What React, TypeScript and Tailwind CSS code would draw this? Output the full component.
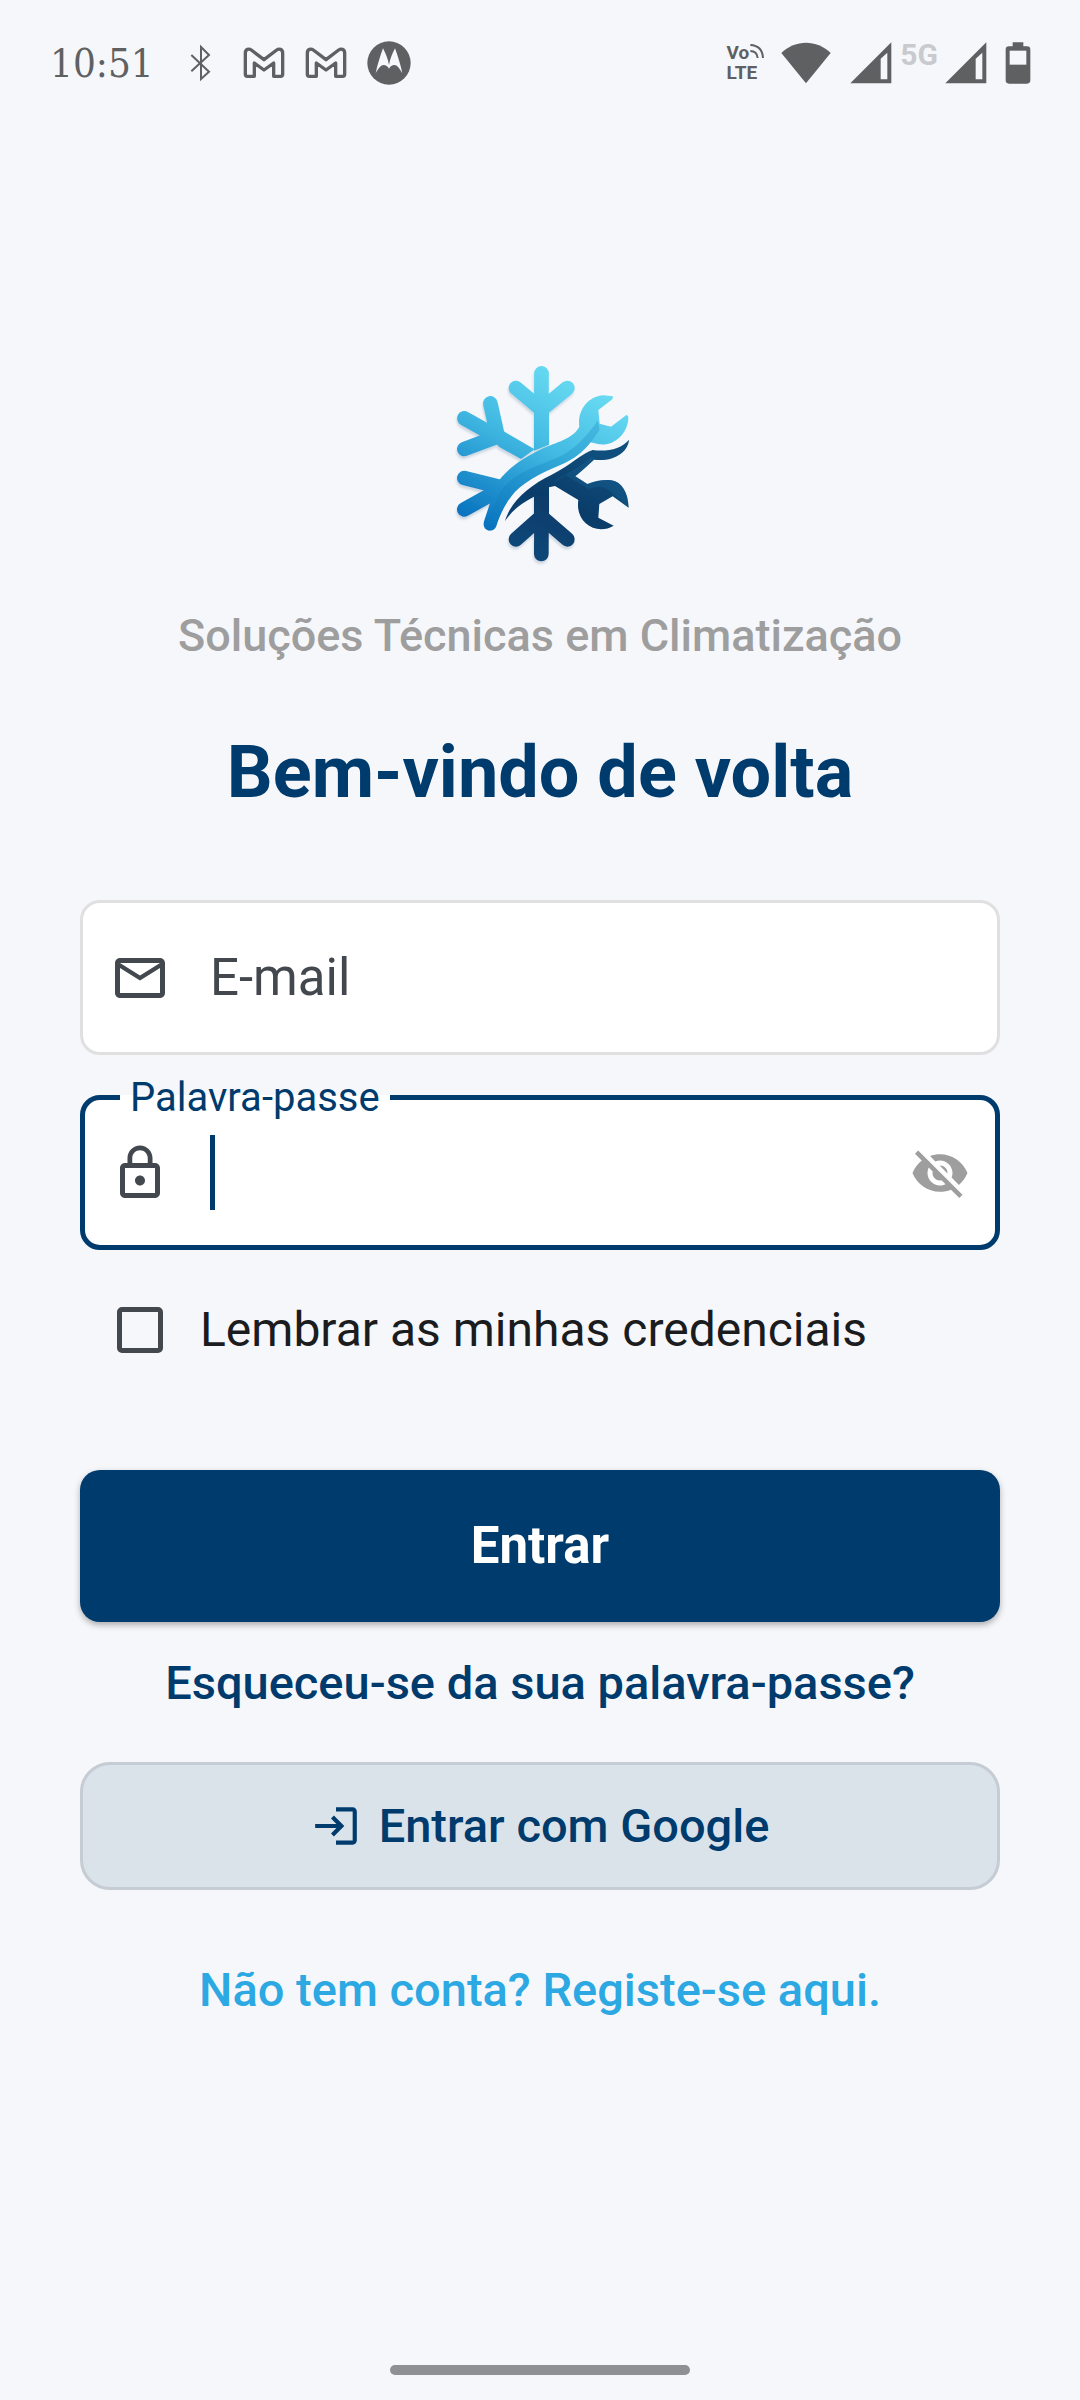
import React, { useState } from 'react';
import { MdLockOutline, MdLogin, MdMailOutline, MdVisibility, MdVisibilityOff } from 'react-icons/md';

const BluetoothIcon = () => (
  <svg width="22" height="38" viewBox="0 0 66 114" fill="none" stroke="#5f6062" strokeWidth="6">
    <path d="M4 33 L57 83 L33 105 V9 L57 33 L4 82" />
  </svg>
);

// Gmail notification icon
const GmailIcon = () => (
  <svg width="42" height="32" viewBox="0 0 126 96" fill="none" stroke="#5f6062" strokeWidth="10" strokeLinejoin="round">
    <path d="M7 82 V18 C7 6 18 4 25 9 L63 38 L101 9 C108 4 119 6 119 18 V82 Q119 88 113 88 H92 V48 L63 69 L34 48 V88 H13 Q7 88 7 82 Z" />
  </svg>
);

const MotorolaIcon = () => (
  <svg width="44" height="44" viewBox="0 0 132 132">
    <circle cx="66" cy="66" r="65" fill="#5f6062" />
    <path
      d="M48 22 C40 44 31 72 26 97 C34 82 42 72 50 72 C57 72 62 76 66 83 C70 76 75 72 82 72 C90 72 98 82 106 97 C101 72 92 44 84 22 C76 38 69 54 66 72 C63 54 56 38 48 22 Z"
      fill="#f6f7fb"
    />
  </svg>
);

const WifiIcon = () => (
  <svg width="50" height="42" viewBox="0 0 150 126" fill="#5f6062">
    <path d="M75 124 L1 33 C44 -8 106 -8 149 33 Z" />
  </svg>
);

const SignalIcon = () => (
  <svg width="42" height="42" viewBox="0 0 126 126">
    <path d="M124 1 V124 H1 Z" fill="#5f6062" />
    <path d="M112 32 V112 H92 V50 Z" fill="#f6f7fb" />
  </svg>
);

const BatteryIcon = () => (
  <svg width="26" height="42" viewBox="0 0 78 126">
    <path d="M23 1 H55 V13 H66 Q76 13 76 23 V115 Q76 125 66 125 H12 Q2 125 2 115 V23 Q2 13 12 13 H23 Z" fill="#5f6062" />
    <path d="M14 26 H64 V68 H14 Z" fill="#f6f7fb" />
  </svg>
);

const StatusBar = () => (
  <div className="flex h-[126px] items-center justify-between pl-[50px] pr-[49px] text-[#5f6062]">
    <div className="flex items-center">
      <span className="font-['DejaVu_Serif_Condensed','DejaVu_Serif',serif] text-[40px] leading-[48px]">10:51</span>
      <div className="ml-9 flex items-center">
        <BluetoothIcon />
      </div>
      <div className="ml-[31px] flex items-center gap-5">
        <GmailIcon />
        <GmailIcon />
        <MotorolaIcon />
      </div>
    </div>
    <div className="flex items-center">
      <div className="flex flex-col text-[19px] font-bold leading-[20px]">
        <div className="flex">
          <span>Vo</span>
          <svg width="16" height="16" viewBox="0 0 48 48" fill="none" stroke="#5f6062" strokeWidth="6">
            <path d="M4 6 Q40 8 42 45 M4 24 Q24 24 26 45" />
          </svg>
        </div>
        <span>LTE</span>
      </div>
      <div className="ml-4 flex items-center">
        <WifiIcon />
        <div className="ml-[19px]">
          <SignalIcon />
        </div>
        <span className="mb-4 ml-2 text-[30px] font-bold leading-[32px] text-[#c9cacd]">5G</span>
        <div className="ml-[7px]">
          <SignalIcon />
        </div>
        <div className="ml-[18px]">
          <BatteryIcon />
        </div>
      </div>
    </div>
  </div>
);

// Snowflake crossed by two wrenches
const Logo = () => (
  <svg width="200" height="220" viewBox="0 0 600 660" role="img" aria-label="Logótipo">
    <defs>
      <linearGradient id="ice" gradientUnits="userSpaceOnUse" x1="380" y1="60" x2="130" y2="540">
        <stop offset="0" stopColor="#6adcf3" />
        <stop offset="0.45" stopColor="#41b9e2" />
        <stop offset="1" stopColor="#0670bd" />
      </linearGradient>
      <linearGradient id="deep" gradientUnits="userSpaceOnUse" x1="460" y1="300" x2="300" y2="640">
        <stop offset="0" stopColor="#0f4f7e" />
        <stop offset="0.5" stopColor="#0a3c69" />
        <stop offset="1" stopColor="#0d487a" />
      </linearGradient>
      <filter id="lift" x="-10%" y="-10%" width="120%" height="120%">
        <feDropShadow dx="-2" dy="8" stdDeviation="3" floodColor="#6b87a0" floodOpacity="0.3" />
      </filter>
    </defs>
    <g filter="url(#lift)">
      <g fill="none" stroke="url(#ice)" strokeLinecap="round" strokeWidth="44">
        <path d="M304.5 70 L304 190 M228 114 L304 178 M382 114 L304 178" />
        <path d="M151 160 L171 250 M73 205 L160 254 M73 297 L172 260" />
        <path d="M73 384 L185 412 M73 478 L185 416" />
      </g>
      <path d="M282 170 H327 V284 L282 302 Z" fill="url(#ice)" />
      <path d="M191 244 L284 298 L243 327 L178 291 L150 262 Z" fill="url(#ice)" />
      <g fill="none" stroke="url(#deep)" strokeLinecap="round" strokeWidth="44">
        <path d="M304.5 500 L304 612 M228 568 L304 500 M382 568 L304 500" />
      </g>
      <path d="M282 425 H327 V510 H282 Z" fill="url(#deep)" />
    </g>
    <path
      d="M178 390 C208 352 245 326 300 299 C350 275 398 268 418 230 C412 185 440 140 490 136 L519 139 L517 148 L475 180 L479 221 L513 230 L560 194 L565 200 C566 230 550 262 515 278 C495 286 475 284 452 277 C430 306 400 328 366 343 C300 370 240 402 213 440 C188 475 176 505 169 528 C162 550 124 546 132 514 L153 450 Z"
      fill="url(#ice)"
    />
    <path
      d="M473 212 C440 258 405 300 350 324 C270 356 205 376 174 440 C163 470 150 500 133 524 C134 548 162 548 168 530 C176 505 188 475 213 440 C240 402 300 370 366 343 C400 328 430 306 452 277 L479 240 Z"
      fill="#0878bd"
      fillOpacity="0.25"
    />
    <path
      d="M195 513 C212 455 265 408 335 374 C392 346 428 308 458 300 C502 306 545 296 567 269 C565 305 522 337 462 329 C442 348 424 364 406 379 L442 402 C470 391 490 388 515 391 C545 397 564 425 566 473 L518 439 L478 462 L475 503 L521 527 C495 543 460 541 437 520 C418 502 411 478 415 450 L345 408 L327 412 L327 440 H282 C240 462 216 482 195 513 Z"
      fill="url(#deep)"
    />
    <path
      d="M338 398 L378 376 L446 418 C475 404 495 410 512 425 L566 473 C564 425 545 397 515 391 C490 388 470 391 442 402 L406 379 L462 329 L455 318 C420 356 370 372 338 398 Z"
      fill="#1b6a9b"
      fillOpacity="0.3"
    />
  </svg>
);

const App: React.FC = () => {
  const [email, setEmail] = useState('');
  const [password, setPassword] = useState('');
  const [showPassword, setShowPassword] = useState(false);
  const [remember, setRemember] = useState(false);

  return (
    <div className="flex min-h-screen flex-col bg-[#f6f7fb] font-[Roboto,sans-serif]">
      <StatusBar />

      <main className="flex flex-col px-20 pt-56">
        <div className="flex flex-col items-center">
          <Logo />
          <p className="mt-9 text-center text-[45px] font-medium leading-[60px] text-[#9e9e9e]">Soluções Técnicas em Climatização</p>
          <h1 className="mt-[62px] text-center text-[72px] font-bold leading-[90px] text-[#003b6d]">Bem-vindo de volta</h1>
        </div>

        <form className="mt-[82px] flex flex-col" onSubmit={(e) => e.preventDefault()}>
          {/* Email */}
          <label className="flex h-[155px] items-center rounded-[20px] border-3 border-[#e0e0e0] bg-white px-[27px]">
            <MdMailOutline size={60} className="shrink-0 text-[#43474e]" />
            <input
              type="email"
              aria-label="E-mail"
              value={email}
              onChange={(e) => setEmail(e.target.value)}
              placeholder="E-mail"
              className="ml-10 min-w-0 flex-1 bg-transparent text-[51px] leading-[60px] text-[#1a1c1e] outline-none placeholder:text-[#43474e]"
            />
          </label>

          {/* Password, label sits in the notch of the border */}
          <fieldset className="mt-[22px] rounded-[20px] border-[5px] border-[#003b6d] bg-white pb-[18px] pl-[25px] pr-[25px]">
            <legend className="ml-[10px] px-[10px] text-[40px] leading-[41px] text-[#003b6d]">
              <label htmlFor="password">Palavra-passe</label>
            </legend>
            <div className="flex h-[109px] items-center">
              <MdLockOutline size={60} className="shrink-0 text-[#43474e]" />
              <span className="ml-10 h-[75px] w-[5px] shrink-0 bg-[#003b6d]" />
              <input
                id="password"
                type={showPassword ? 'text' : 'password'}
                value={password}
                onChange={(e) => setPassword(e.target.value)}
                className="min-w-0 flex-1 bg-transparent text-[51px] leading-[60px] text-[#1a1c1e] outline-none"
              />
              <button type="button" aria-label="Mostrar palavra-passe" onClick={() => setShowPassword(!showPassword)} className="text-[#9e9e9e]">
                {showPassword ? <MdVisibility size={60} /> : <MdVisibilityOff size={60} />}
              </button>
            </div>
          </fieldset>

          <label className="mt-5 flex h-[120px] items-center gap-[37px] pl-[37px] text-[48px] leading-[60px] text-[#1a1c1e]">
            <input
              type="checkbox"
              checked={remember}
              onChange={(e) => setRemember(e.target.checked)}
              className="size-[46px] shrink-0 appearance-none rounded-[5px] border-[5px] border-[#43474e] checked:bg-[#003b6d]"
            />
            Lembrar as minhas credenciais
          </label>

          <button type="submit" className="mt-20 h-[152px] rounded-[20px] bg-[#003b6d] text-[51px] font-bold leading-[60px] text-white shadow-[0_3px_6px_rgba(0,0,0,0.3)]">
            Entrar
          </button>

          <a href="#recuperar" className="mt-[31px] self-center text-[47px] font-medium leading-[60px] text-[#003b6d]">
            Esqueceu-se da sua palavra-passe?
          </a>

          <button type="button" className="mt-[49px] flex h-[128px] items-center justify-center gap-[18px] rounded-[30px] border-3 border-[#c6ccd4] bg-[#dbe3ea] text-[47px] font-medium leading-[60px] text-[#003b6d]">
            <MdLogin size={50} />
            Entrar com Google
          </button>

          <a href="#registar" className="mt-[70px] self-center text-[47px] font-medium leading-[60px] text-[#2ca8e2]">
            Não tem conta? Registe-se aqui.
          </a>
        </form>
      </main>

      {/* Navigation handle */}
      <div className="mt-auto flex justify-center pb-[25px]">
        <div className="h-[10px] w-[300px] rounded-full bg-[#8f9093]" />
      </div>
    </div>
  );
};

export default App;
